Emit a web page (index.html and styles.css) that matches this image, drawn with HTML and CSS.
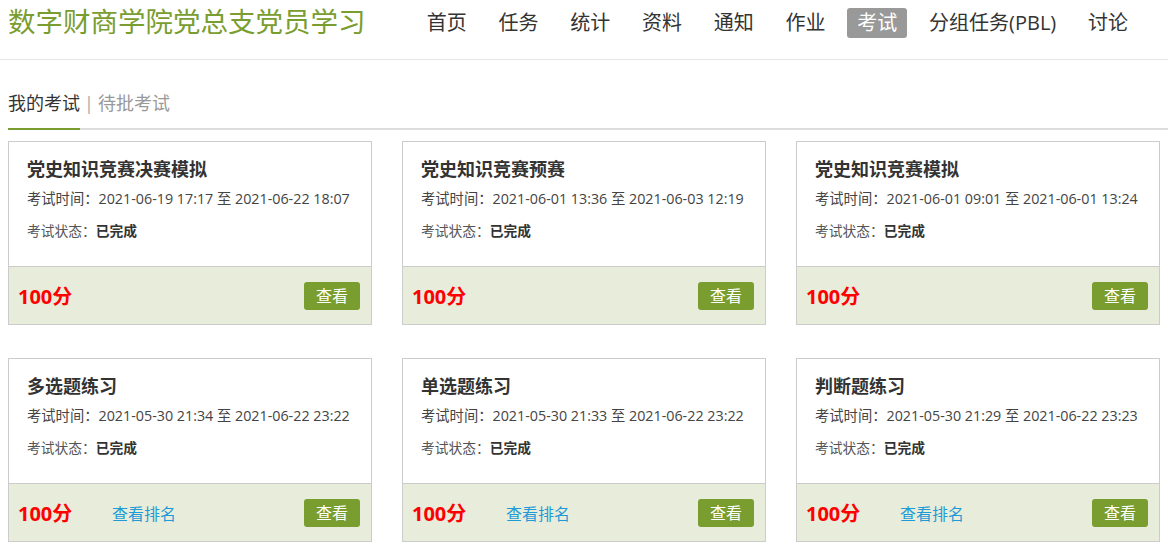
FILE: index.html
```html
<!DOCTYPE html>
<html lang="zh-CN">
<head>
    <meta charset="UTF-8">
    <meta name="viewport" content="width=device-width, initial-scale=1.0">
    <title>我的考试</title>
    <link rel="stylesheet" href="styles.css">
</head>
<body>
    <div class="header">
        <div class="site-title">数字财商学院党总支党员学习</div>
        <div class="nav">
            <a class="nav-item" href="#">首页</a>
            <a class="nav-item" href="#">任务</a>
            <a class="nav-item" href="#">统计</a>
            <a class="nav-item" href="#">资料</a>
            <a class="nav-item" href="#">通知</a>
            <a class="nav-item" href="#">作业</a>
            <a class="nav-item active" href="#">考试</a>
            <a class="nav-item" href="#">分组任务(PBL)</a>
            <a class="nav-item" href="#">讨论</a>
        </div>
    </div>

    <div class="main">
        <div class="tabs">
            <a class="tab active" href="#">我的考试</a>
            <span class="tab-sep">|</span>
            <a class="tab" href="#">待批考试</a>
        </div>

        <div class="exam-list">
            <div class="exam-card">
                <div class="exam-body">
                    <div class="exam-title">党史知识竞赛决赛模拟</div>
                    <div class="exam-time">考试时间：2021-06-19 17:17 至 2021-06-22 18:07</div>
                    <div class="exam-status">考试状态：<b>已完成</b></div>
                </div>
                <div class="exam-foot">
                    <span class="score">100分</span>
                    <a class="btn-view" href="#">查看</a>
                </div>
            </div>
            <div class="exam-card">
                <div class="exam-body">
                    <div class="exam-title">党史知识竞赛预赛</div>
                    <div class="exam-time">考试时间：2021-06-01 13:36 至 2021-06-03 12:19</div>
                    <div class="exam-status">考试状态：<b>已完成</b></div>
                </div>
                <div class="exam-foot">
                    <span class="score">100分</span>
                    <a class="btn-view" href="#">查看</a>
                </div>
            </div>
            <div class="exam-card">
                <div class="exam-body">
                    <div class="exam-title">党史知识竞赛模拟</div>
                    <div class="exam-time">考试时间：2021-06-01 09:01 至 2021-06-01 13:24</div>
                    <div class="exam-status">考试状态：<b>已完成</b></div>
                </div>
                <div class="exam-foot">
                    <span class="score">100分</span>
                    <a class="btn-view" href="#">查看</a>
                </div>
            </div>
            <div class="exam-card">
                <div class="exam-body">
                    <div class="exam-title">多选题练习</div>
                    <div class="exam-time">考试时间：2021-05-30 21:34 至 2021-06-22 23:22</div>
                    <div class="exam-status">考试状态：<b>已完成</b></div>
                </div>
                <div class="exam-foot">
                    <span class="score">100分</span>
                    <a class="rank-link" href="#">查看排名</a>
                    <a class="btn-view" href="#">查看</a>
                </div>
            </div>
            <div class="exam-card">
                <div class="exam-body">
                    <div class="exam-title">单选题练习</div>
                    <div class="exam-time">考试时间：2021-05-30 21:33 至 2021-06-22 23:22</div>
                    <div class="exam-status">考试状态：<b>已完成</b></div>
                </div>
                <div class="exam-foot">
                    <span class="score">100分</span>
                    <a class="rank-link" href="#">查看排名</a>
                    <a class="btn-view" href="#">查看</a>
                </div>
            </div>
            <div class="exam-card">
                <div class="exam-body">
                    <div class="exam-title">判断题练习</div>
                    <div class="exam-time">考试时间：2021-05-30 21:29 至 2021-06-22 23:23</div>
                    <div class="exam-status">考试状态：<b>已完成</b></div>
                </div>
                <div class="exam-foot">
                    <span class="score">100分</span>
                    <a class="rank-link" href="#">查看排名</a>
                    <a class="btn-view" href="#">查看</a>
                </div>
            </div>
        </div>
    </div>
</body>
</html>
```

FILE: styles.css
```css
body {
    margin: 0;
    font-family: "Open Sans", "Noto Sans CJK SC", sans-serif;
    color: #333;
    background-color: #fff;
}
a {
    text-decoration: none;
}

.header {
    height: 52px;
    padding-top: 7px;
    border-bottom: 1px solid #e5e5e5;
    display: flex;
    justify-content: space-between;
    align-items: flex-start;
}
.site-title {
    padding-left: 8px;
    font-size: 27.5px;
    line-height: 30px;
    color: #7a9d2f;
}
.nav {
    display: flex;
    margin-top: 1px;
    margin-right: 30px;
}
.nav-item {
    margin-left: 11.75px;
    padding: 0 10px;
    font-size: 20px;
    line-height: 30px;
    color: #333;
    border-radius: 3px;
}
.nav-item.active {
    background-color: #999;
    color: #fff;
}

.main {
    padding-left: 8px;
}
.tabs {
    margin-top: 28px;
    display: flex;
    border-bottom: 2px solid #ddd;
    font-size: 18px;
    line-height: 30px;
}
.tab {
    padding-bottom: 10px;
    color: #999;
}
.tab.active {
    color: #333;
    border-bottom: 2px solid #7a9d2f;
    margin-bottom: -2px;
}
.tab-sep {
    color: #aaa;
    margin: 0 4px;
}

.exam-list {
    margin-top: 11px;
    display: grid;
    grid-template-columns: repeat(3, 364px);
    column-gap: 30px;
    row-gap: 33px;
}
.exam-card {
    box-sizing: border-box;
    height: 184px;
    border: 1px solid #ccc;
    display: flex;
    flex-direction: column;
}
.exam-body {
    height: 124px;
    box-sizing: border-box;
    padding: 15px 18px 0;
}
.exam-title {
    font-size: 18px;
    line-height: 24px;
    font-weight: bold;
    color: #333;
}
.exam-time {
    margin-top: 8px;
    font-size: 14.3px;
    line-height: 20px;
    color: #444;
}
.exam-status {
    margin-top: 12px;
    font-size: 13.75px;
    line-height: 20px;
    color: #555;
}
.exam-status b {
    color: #333;
}
.exam-foot {
    flex: 1;
    border-top: 1px solid #ccc;
    background-color: #e8ecda;
    display: flex;
    align-items: center;
    padding: 0 11px 0 9px;
}
.score {
    width: 59px;
    font-size: 20px;
    font-weight: bold;
    color: #f00;
}
.rank-link {
    margin-left: 35px;
    font-size: 16px;
    color: #1e9bd7;
}
.btn-view {
    margin-left: auto;
    width: 56px;
    height: 28px;
    line-height: 28px;
    text-align: center;
    font-size: 16px;
    color: #fff;
    background-color: #7a9d2f;
    border-radius: 3px;
}
```
